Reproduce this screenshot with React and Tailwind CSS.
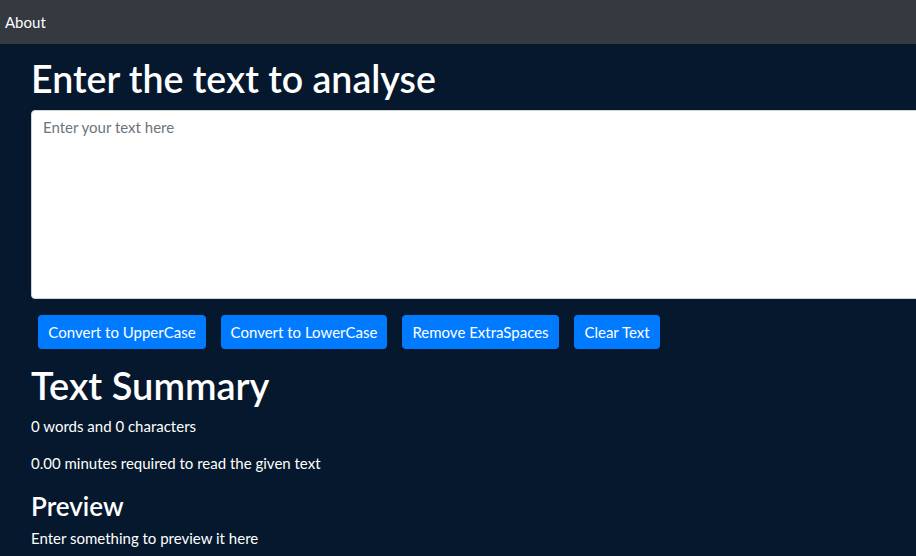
const buttons = [
  { label: 'Convert to UpperCase', w: 'w-[168px]' },
  { label: 'Convert to LowerCase', w: 'w-[166px]' },
  { label: 'Remove ExtraSpaces', w: 'w-[157px]' },
  { label: 'Clear Text', w: 'w-[86px]' },
]

export default function App() {
  return (
    <div className="min-h-screen w-full overflow-hidden bg-[#06182d] text-white font-['Lato',sans-serif]">
      {/* Navbar */}
      <nav className="h-[44px] bg-[#343a40] flex items-center px-[5px]">
        <span className="text-[15px] text-white">About</span>
      </nav>

      <div className="pl-[31px] pt-[12px]">
        <h1 className="text-[37.5px] leading-[45px] font-semibold">Enter the text to analyse</h1>
        <textarea
          className="mt-[9px] block w-[1000px] h-[189px] bg-white rounded-[4px] border border-[#ced4da] px-[11px] pt-[4px] text-[15px] leading-[24px] text-[#212529] placeholder:text-[#6c757d] resize-none outline-none"
          placeholder="Enter your text here"
        />

        {/* Actions */}
        <div className="mt-[16px] flex gap-[15px] pl-[7px]">
          {buttons.map((b) => (
            <button
              key={b.label}
              className={`${b.w} h-[34px] rounded-[4px] bg-[#007bff] text-white text-[15px] whitespace-nowrap`}
            >
              {b.label}
            </button>
          ))}
        </div>

        <h1 className="mt-[14px] text-[38px] leading-[45px] font-semibold">Text Summary</h1>
        <p className="mt-[6px] text-[15px] leading-[24px]">0 words and 0 characters</p>
        <p className="mt-[13px] text-[15px] leading-[24px]">0.00 minutes required to read the given text</p>

        <h3 className="mt-[15px] text-[26px] leading-[32px] font-semibold">Preview</h3>
        <p className="mt-[4px] text-[15px] leading-[24px]">Enter something to preview it here</p>
      </div>
    </div>
  )
}
